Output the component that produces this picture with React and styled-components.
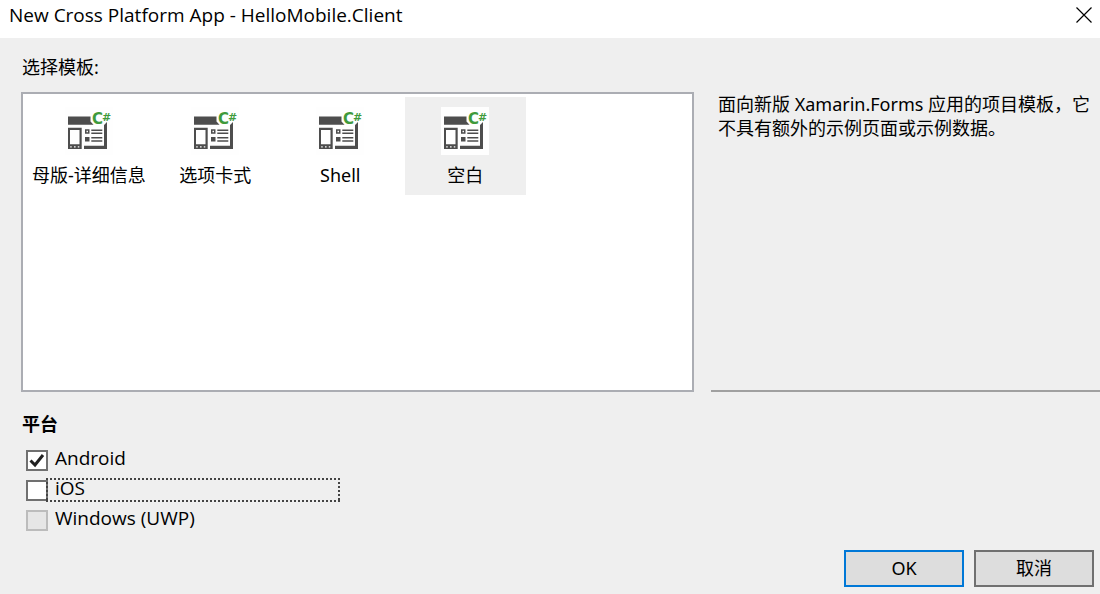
import React, { useState } from "react";
import styled, { createGlobalStyle } from "styled-components";

const GlobalStyle = createGlobalStyle`
  *, *::before, *::after { box-sizing: border-box; }
  body {
    margin: 0;
    background: #efefef;
    color: #000;
    font-family: "Noto Sans", "Noto Sans CJK SC", sans-serif;
    font-size: 18px;
    line-height: 24px;
  }
  button, input { font: inherit; color: inherit; }
`;

const Dialog = styled.div`
  display: flex;
  flex-direction: column;
  min-height: 100vh;
`;

const TitleBar = styled.header`
  display: flex;
  align-items: center;
  justify-content: space-between;
  height: 38px;
  padding: 0 0 8px 9px;
  background: #fff;
`;

const Title = styled.h1`
  margin: 0;
  font-family: "Open Sans", sans-serif;
  font-size: 19px;
  font-weight: 400;
`;

const CloseButton = styled.button`
  display: flex;
  align-items: center;
  justify-content: center;
  width: 32px;
  height: 30px;
  padding: 0;
  border: 0;
  background: transparent;
`;

const Content = styled.main`
  flex: 1;
  display: flex;
  flex-direction: column;
  padding: 17px 0 0 21px;
`;

const Caption = styled.h2`
  margin: 0 0 13px;
  padding: 0 1px;
  font-size: 18px;
  font-weight: 400;
`;

const Columns = styled.div`
  display: grid;
  grid-template-columns: minmax(0, 673fr) minmax(0, 389fr);
  column-gap: 17px;
  min-height: 300px;
`;

const TemplateList = styled.div`
  display: flex;
  flex-wrap: wrap;
  align-content: flex-start;
  gap: 4px;
  padding: 3px 4px;
  background: #fff;
  border: 2px solid #abadb3;
`;

const TemplateButton = styled.button`
  display: flex;
  flex-direction: column;
  align-items: center;
  gap: 8px;
  min-width: 121px;
  height: 98px;
  padding: 10px 5px 0;
  border: 0;
  background: ${(p) => (p.$selected ? "#efefef" : "transparent")};
  white-space: nowrap;
`;

const Description = styled.p`
  margin: 0;
  padding: 0 7px;
  border-bottom: 2px solid #a0a0a0;
`;

const Platforms = styled.fieldset`
  display: flex;
  flex-direction: column;
  margin: 20px 0 0;
  padding: 0;
  border: 0;
`;

const PlatformsTitle = styled.legend`
  margin-bottom: 10px;
  padding: 0 1px;
  font-weight: 700;
`;

const PlatformRow = styled.label`
  display: flex;
  align-items: flex-start;
  height: 30px;
  padding-left: 5px;
`;

const CheckBox = styled.input`
  appearance: none;
  flex: none;
  width: 22px;
  height: 21px;
  margin: 4px 0 0;
  border: 2px solid #707070;
  background: #fff;

  &:checked {
    background: #fff
      url("data:image/svg+xml,%3Csvg xmlns='http://www.w3.org/2000/svg' viewBox='0 0 18 17'%3E%3Cpath d='M2.500 8.500l4.500 4.500L15 3' fill='none' stroke='%23212121' stroke-width='3'/%3E%3C/svg%3E")
      center / 18px 17px no-repeat;
  }

  &:disabled {
    border-color: #bcbcbc;
    background: #e6e6e6;
  }
`;

const PlatformName = styled.span`
  position: relative;
  width: 294px;
  height: 24px;
  margin: 2px 0 0 -2px;
  padding: 0 9px;
  font-family: "Open Sans", sans-serif;
  font-size: 19px;
  line-height: 20px;
  ${(p) =>
    p.$focused &&
    `
    background:
      repeating-linear-gradient(90deg, #444 0 2px, transparent 2px 4px) top / 100% 2px no-repeat,
      repeating-linear-gradient(90deg, #444 0 2px, transparent 2px 4px) bottom / 100% 2px no-repeat,
      repeating-linear-gradient(#444 0 2px, transparent 2px 4px) left / 2px 100% no-repeat,
      repeating-linear-gradient(#444 0 2px, transparent 2px 4px) right / 2px 100% no-repeat;
  `}
`;

const Actions = styled.footer`
  display: flex;
  justify-content: flex-end;
  gap: 10px;
  padding: 0 6px 7px;
`;

const ActionButton = styled.button`
  width: 120px;
  height: 37px;
  padding: 0 0 2px;
  border: 2px solid ${(p) => (p.$primary ? "#0078d7" : "#707070")};
  background: #ddd;
`;

function TemplateIcon() {
  return (
    <svg width="48" height="48" viewBox="0 0 48 48" aria-hidden="true">
      <rect width="48" height="48" fill="#fefefe" />
      <g fill="#4d4d4d">
        <path d="M3 9.500h22.500v5l3 3.300H3z" />
        <path d="M42 15v27H19v-3.300h20V18z" />
        <path fillRule="evenodd" d="M3 20.800h13.700V42H3zM5 23v14.300h9.500V23zM5.200 39.200v1.300h1.500v-1.300zM9 39.200v1.300h1.600v-1.300zM12.800 39.200v1.300h1.500v-1.300z" />
        <path fillRule="evenodd" d="M20 22.300h4.500v4.500H20zM21.500 23.800v1.500H23v-1.500z" />
        <path d="M20 30h4.500v4.500H20z" />
        <path d="M26.300 22.500h11V24h-11zM26.300 25.500h11V27h-11zM26.300 30h11v1.500h-11zM26.300 33.200h11v1.500h-11z" />
      </g>
      <g fill="#3f9a3c" fontWeight="700" fontFamily="DejaVu Sans, sans-serif">
        <text x="27" y="17" fontSize="15">C</text>
        <text x="37" y="14" fontSize="11">#</text>
      </g>
    </svg>
  );
}

const templates = ["母版-详细信息", "选项卡式", "Shell", "空白"];

const platforms = [
  { name: "Android", checked: true },
  { name: "iOS", focused: true },
  { name: "Windows (UWP)", disabled: true },
];

export default function App() {
  const [selected, setSelected] = useState("空白");

  return (
    <>
      <GlobalStyle />
      <Dialog role="dialog" aria-labelledby="dialog-title">
        <TitleBar>
          <Title id="dialog-title">New Cross Platform App - HelloMobile.Client</Title>
          <CloseButton type="button" aria-label="Close">
            <svg width="16" height="16" viewBox="0 0 16 16" aria-hidden="true">
              <path d="M0.500 0.500l15 15M15.500 0.500l-15 15" stroke="#000" strokeWidth="1.200" />
            </svg>
          </CloseButton>
        </TitleBar>
        <Content>
          <Caption id="templates-caption">选择模板:</Caption>
          <Columns>
            <TemplateList role="group" aria-labelledby="templates-caption">
              {templates.map((name) => (
                <TemplateButton
                  key={name}
                  type="button"
                  aria-pressed={name === selected}
                  $selected={name === selected}
                  onClick={() => setSelected(name)}
                >
                  <TemplateIcon />
                  {name}
                </TemplateButton>
              ))}
            </TemplateList>
            <Description>
              面向新版 Xamarin.Forms 应用的项目模板，它不具有额外的示例页面或示例数据。
            </Description>
          </Columns>
          <Platforms>
            <PlatformsTitle>平台</PlatformsTitle>
            {platforms.map((p) => (
              <PlatformRow key={p.name}>
                <CheckBox type="checkbox" defaultChecked={p.checked} disabled={p.disabled} />
                <PlatformName $focused={p.focused}>{p.name}</PlatformName>
              </PlatformRow>
            ))}
          </Platforms>
        </Content>
        <Actions>
          <ActionButton type="button" $primary>OK</ActionButton>
          <ActionButton type="button">取消</ActionButton>
        </Actions>
      </Dialog>
    </>
  );
}
